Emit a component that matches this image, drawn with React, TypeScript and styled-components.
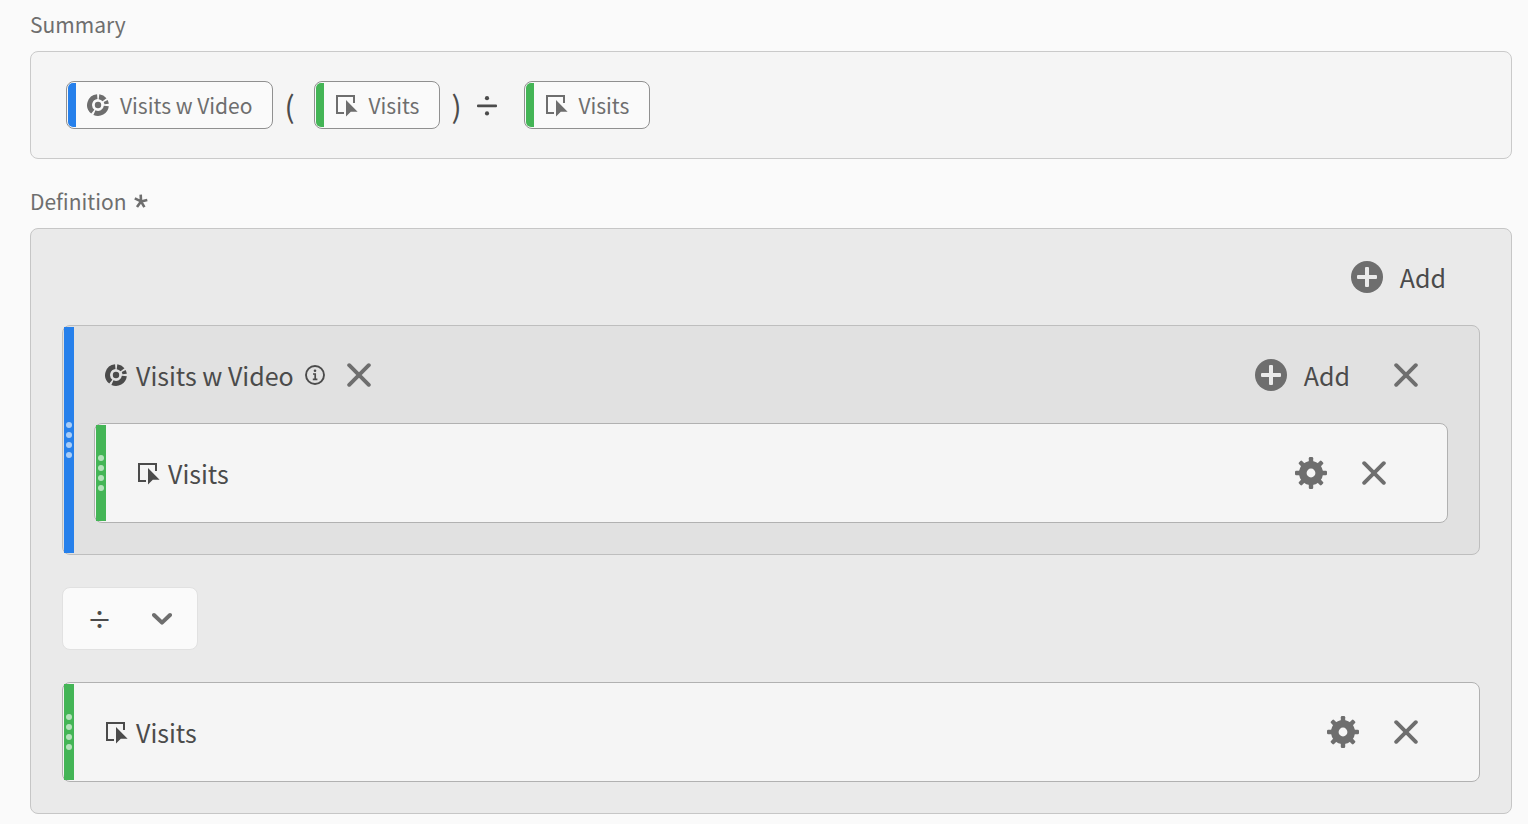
import React from "react";
import styled, { createGlobalStyle } from "styled-components";

const GlobalStyle = createGlobalStyle`
  *, *::before, *::after { box-sizing: border-box; }
  body {
    margin: 0;
    background: #fafafa;
    color: #4b4b4b;
    font-family: "Noto Sans CJK JP", "Noto Sans", sans-serif;
    font-size: 25px;
    line-height: 32px;
  }
  button, select { font: inherit; color: inherit; }
  svg { display: block; flex: none; }
`;

const BLUE = "#2680eb";
const GREEN = "#44b556";

const Page = styled.main`
  padding: 8px 16px 10px 30px;
`;

const Section = styled.section`
  & + & { margin-top: 26px; }
`;

const Label = styled.h2`
  display: flex;
  align-items: center;
  gap: 7px;
  margin: 0 0 11px;
  font-size: 21px;
  line-height: 32px;
  font-weight: 400;
  color: #6e6e6e;
`;

const SummaryBox = styled.div`
  display: flex;
  align-items: center;
  padding: 29px 35px;
  background: #f5f5f5;
  border: 1px solid #cacaca;
  border-radius: 8px;
`;

const Chip = styled.span<{ $color: string }>`
  display: inline-flex;
  align-items: center;
  gap: 11px;
  height: 48px;
  padding: 1px 20px 1px 1px;
  overflow: hidden;
  background: #fafafa;
  border: 1px solid #909090;
  border-radius: 8px;
  color: #6e6e6e;
  font-size: 21px;
  white-space: nowrap;

  &::before {
    content: "";
    align-self: stretch;
    width: 8px;
    background: ${(p) => p.$color};
    border-radius: 5px 0 0 5px;
  }
`;

const Paren = styled.span<{ $side: "open" | "close" }>`
  width: ${(p) => (p.$side === "open" ? 41 : 37)}px;
  padding-left: 11px;
  font-size: 30px;
`;

const SummaryOperator = styled.span`
  display: flex;
  width: 47px;
`;

const DefinitionBox = styled.div`
  padding: 0 31px 31px;
  background: #eaeaea;
  border: 1px solid #c6c6c6;
  border-radius: 8px;
`;

const Toolbar = styled.div`
  display: flex;
  align-items: center;
  justify-content: flex-end;
  height: 96px;
  padding-right: 34px;
`;

const Card = styled.div<{ $container?: boolean }>`
  display: flex;
  min-height: 100px;
  padding: 1px;
  background: ${(p) => (p.$container ? "#e1e1e1" : "#f5f5f5")};
  border: 1px solid ${(p) => (p.$container ? "#bebebe" : "#b1b1b1")};
  border-radius: 8px;
`;

const Handle = styled.span<{ $color: string }>`
  flex: none;
  display: flex;
  flex-direction: column;
  align-items: center;
  justify-content: center;
  gap: 4px;
  width: 10px;
  background: ${(p) => p.$color};
  cursor: grab;
`;

const Dot = styled.i`
  width: 6px;
  height: 6px;
  border-radius: 50%;
  background: rgba(255, 255, 255, 0.6);
`;

const CardBody = styled.div<{ $container?: boolean }>`
  flex: 1;
  min-width: 0;
  padding: ${(p) => (p.$container ? "0 30px 30px 20px" : "0")};
`;

const CardRow = styled.div<{ $container?: boolean }>`
  display: flex;
  align-items: center;
  justify-content: space-between;
  height: 96px;
  padding: ${(p) => (p.$container ? "0 30px 0 11px" : "0 60px 0 31px")};
`;

const Group = styled.div<{ $gap: number }>`
  display: flex;
  align-items: center;
  gap: ${(p) => p.$gap}px;
  white-space: nowrap;
`;

const IconButton = styled.button`
  display: flex;
  align-items: center;
  padding: 0;
  border: 0;
  background: none;
  color: #6e6e6e;
  cursor: pointer;
`;

const InfoButton = styled(IconButton)`
  margin-left: 2px;
  color: #4b4b4b;
`;

const AddButton = styled(IconButton)`
  gap: 17px;
  span { color: #4b4b4b; }
`;

const OperatorField = styled.div`
  position: relative;
  width: 136px;
  margin: 32px 0;
  > svg {
    position: absolute;
    right: 26px;
    top: 25px;
    color: #6e6e6e;
    pointer-events: none;
  }
`;

const OperatorSelect = styled.select`
  display: block;
  appearance: none;
  width: 100%;
  height: 63px;
  padding: 0 25px 2px 24px;
  background: #fafafa;
  border: 1px solid #e1e1e1;
  border-radius: 8px;
  font-weight: 500;
  cursor: pointer;
`;

const arc = (from: number, to: number, r: number) => {
  const at = (deg: number) => {
    const a = ((deg - 90) * Math.PI) / 180;
    return `${(11 + r * Math.cos(a)).toFixed(2)} ${(11 + r * Math.sin(a)).toFixed(2)}`;
  };
  return `M${at(from)}A${r} ${r} 0 0 1 ${at(to)}`;
};

const SegmentIcon = () => (
  <svg width="22" height="22" viewBox="0 0 22 22" fill="none" stroke="currentColor" aria-hidden="true">
    <path strokeWidth="5" d={[arc(7, 51, 8.4), arc(97, 205, 8.4), arc(218, 355, 8.4)].join("")} />
    <path strokeWidth="4.4" d={arc(62, 84, 8.7)} />
    <circle cx="11" cy="11" r="3.2" fill="currentColor" stroke="none" />
  </svg>
);

const MetricIcon = () => (
  <svg width="22" height="22" viewBox="0 0 22 22" overflow="visible" aria-hidden="true">
    <path d="M9 19H2V2H19V9" fill="none" stroke="currentColor" strokeWidth="2" />
    <path d="M11 6V22.6L15.8 17.8H22.6Z" fill="currentColor" />
  </svg>
);

const CrossIcon = () => (
  <svg width="24" height="24" viewBox="0 0 24 24" fill="none" stroke="currentColor" strokeWidth="3.9" strokeLinecap="round" aria-hidden="true">
    <path d="M2.2 2.2L21.8 21.8M21.8 2.2L2.2 21.8" />
  </svg>
);

const PlusIcon = () => (
  <svg width="32" height="32" viewBox="0 0 32 32" aria-hidden="true">
    <circle cx="16" cy="16" r="16" fill="currentColor" />
    <g fill="#eaeaea">
      <rect x="14" y="6" width="4" height="20" rx="1" />
      <rect x="6" y="14" width="20" height="4" rx="1" />
    </g>
  </svg>
);

const GearIcon = () => (
  <svg width="32" height="32" viewBox="0 0 32 32" fill="none" stroke="currentColor" aria-hidden="true">
    <circle cx="16" cy="16" r="8.2" strokeWidth="7.6" />
    <g fill="currentColor" stroke="none">
      {[0, 45, 90, 135, 180, 225, 270, 315].map((a) => (
        <rect key={a} x="13.8" y="0" width="4.4" height="6" rx="1.2" transform={`rotate(${a} 16 16)`} />
      ))}
    </g>
  </svg>
);

const InfoIcon = () => (
  <svg width="20" height="20" viewBox="0 0 20 20" fill="none" stroke="currentColor" aria-hidden="true">
    <circle cx="10" cy="10" r="9" strokeWidth="1.9" />
    <circle cx="10" cy="5.8" r="1.3" fill="currentColor" stroke="none" />
    <path d="M8 9H10.2V14M7.8 14.4H12.4" strokeWidth="1.7" />
  </svg>
);

const ChevronIcon = () => (
  <svg width="20" height="14" viewBox="0 0 20 14" fill="none" stroke="currentColor" strokeWidth="4" strokeLinecap="round" strokeLinejoin="round" aria-hidden="true">
    <path d="M2 3L10 10.6L18 3" />
  </svg>
);

const DivideIcon = () => (
  <svg width="20" height="22" viewBox="0 0 20 22" fill="#4b4b4b" role="img" aria-label="divided by">
    <circle cx="10" cy="4.2" r="2.1" />
    <rect x="0" y="10.6" width="20" height="2.6" rx="1" />
    <circle cx="10" cy="19.4" r="2.1" />
  </svg>
);

const RequiredIcon = () => (
  <svg width="14" height="14" viewBox="0 0 14 14" fill="none" stroke="currentColor" strokeWidth="2.6" role="img" aria-label="required">
    <path d="M7 7.4L6.7 0.6M7 7.4L13.3 6M7 7.4L10.4 13.2M7 7.4L3 13M7 7.4L0.8 4.4" />
  </svg>
);

const DragHandle = ({ color }: { color: string }) => (
  <Handle $color={color}>
    <Dot /><Dot /><Dot /><Dot />
  </Handle>
);

const Add = () => (
  <AddButton type="button"><PlusIcon /><span>Add</span></AddButton>
);

const Remove = ({ label }: { label: string }) => (
  <IconButton type="button" aria-label={label}><CrossIcon /></IconButton>
);

const MetricCard = () => (
  <Card>
    <DragHandle color={GREEN} />
    <CardBody>
      <CardRow>
        <Group $gap={9}><MetricIcon /><span>Visits</span></Group>
        <Group $gap={35}>
          <IconButton type="button" aria-label="Settings"><GearIcon /></IconButton>
          <Remove label="Remove Visits" />
        </Group>
      </CardRow>
    </CardBody>
  </Card>
);

export default function App() {
  return (
    <>
      <GlobalStyle />
      <Page>
        <Section>
          <Label>Summary</Label>
          <SummaryBox>
            <Chip $color={BLUE}><SegmentIcon />Visits w Video</Chip>
            <Paren $side="open">(</Paren>
            <Chip $color={GREEN}><MetricIcon />Visits</Chip>
            <Paren $side="close">)</Paren>
            <SummaryOperator><DivideIcon /></SummaryOperator>
            <Chip $color={GREEN}><MetricIcon />Visits</Chip>
          </SummaryBox>
        </Section>
        <Section>
          <Label>Definition <RequiredIcon /></Label>
          <DefinitionBox>
            <Toolbar><Add /></Toolbar>
            <Card $container>
              <DragHandle color={BLUE} />
              <CardBody $container>
                <CardRow $container>
                  <Group $gap={22}>
                    <Group $gap={9}>
                      <SegmentIcon />
                      <span>Visits w Video</span>
                      <InfoButton type="button" aria-label="Segment info"><InfoIcon /></InfoButton>
                    </Group>
                    <Remove label="Remove segment" />
                  </Group>
                  <Group $gap={44}>
                    <Add />
                    <Remove label="Remove container" />
                  </Group>
                </CardRow>
                <MetricCard />
              </CardBody>
            </Card>
            <OperatorField>
              <OperatorSelect aria-label="Operator" defaultValue="divide">
                <option value="divide">÷</option>
                <option value="multiply">×</option>
                <option value="add">+</option>
                <option value="subtract">−</option>
              </OperatorSelect>
              <ChevronIcon />
            </OperatorField>
            <MetricCard />
          </DefinitionBox>
        </Section>
      </Page>
    </>
  );
}
